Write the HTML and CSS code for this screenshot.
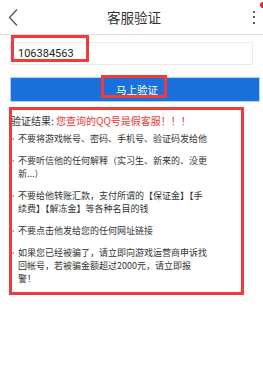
FILE: index.html
```html
<!DOCTYPE html>
<html lang="zh-CN">
<head>
<meta charset="utf-8">
<title>客服验证</title>
<link rel="stylesheet" href="styles.css">
</head>
<body>
<div class="page">
  <header class="header">
    <div class="back">
      <svg width="12" height="20" viewBox="0 0 12 20"><polyline points="9,1.5 1.5,9.5 9,17.5" fill="none" stroke="#555" stroke-width="1.3"/></svg>
    </div>
    <h1 class="title">客服验证</h1>
    <div class="menu">
      <span class="dot"></span><span class="dot"></span><span class="dot"></span>
      <span class="badge"></span>
    </div>
  </header>
  <div class="field">
    <div class="input">106384563</div>
    <span class="mark mark-input"></span>
  </div>
  <div class="btn-wrap">
    <div class="btn"><span class="btn-text">马上验证</span></div>
    <span class="mark mark-btn"></span>
  </div>
  <section class="result">
    <p class="label">验证结果: <span class="warn">您查询的QQ号是假客服！！！</span></p>
    <ul class="tips">
      <li>不要将游戏帐号、密码、手机号、验证码发给他</li>
      <li>不要听信他的任何解释（实习生、新来的、没更新...）</li>
      <li>不要给他转账汇款，支付所谓的【保证金】【手续费】【解冻金】等各种名目的钱</li>
      <li>不要点击他发给您的任何网址链接</li>
      <li>如果您已经被骗了，请立即向游戏运营商申诉找回帐号，若被骗金额超过2000元，请立即报警！</li>
    </ul>
    <span class="mark mark-result"></span>
  </section>
</div>
</body>
</html>
```
FILE: styles.css
```css
* { box-sizing: border-box; }
html, body { margin: 0; padding: 0; background: #fff; }
body {
  font-family: "Noto Sans CJK SC", "Noto Sans", sans-serif;
  color: #333;
  width: 263px;
  height: 385px;
  overflow: hidden;
}
.page { position: relative; }
.header {
  height: 35px;
  border-bottom: 1px solid #e0e0e0;
  display: flex;
  align-items: center;
  position: relative;
}
.back {
  width: 34px;
  padding-left: 8px;
  display: flex;
  align-items: center;
  padding-top: 1px;
}
.title {
  flex: 1;
  margin: 0;
  text-align: center;
  font-size: 13.5px;
  font-weight: normal;
  color: #333;
  line-height: 20px;
}
.menu {
  width: 29px;
  height: 34px;
  display: flex;
  flex-direction: column;
  align-items: flex-end;
  justify-content: center;
  gap: 3.5px;
  padding-right: 8px;
  position: relative;
}
.dot { width: 2px; height: 2px; background: #555; display: block; }
.badge {
  position: absolute;
  right: -3px;
  top: 2px;
  width: 6px;
  height: 6px;
  border-radius: 50%;
  background: #e8282d;
}
.field { position: relative; margin: 7px 10px 0 10px; }
.input {
  width: 243px;
  height: 23px;
  border: 1px solid #ebebeb;
  font-family: Roboto, "Noto Sans", sans-serif;
  font-size: 11px;
  color: #222;
  line-height: 21px;
  padding-left: 7px;
}
.mark {
  position: absolute;
  border: 3px solid #f23a3a;
  pointer-events: none;
}
.mark-input { left: 1px; top: -7px; width: 78px; height: 27px; }
.btn-wrap { position: relative; margin: 12px 3px 0 10px; }
.btn {
  height: 25px;
  background: #1b71db;
  border: 1px solid #a9d3f4;
  border-radius: 1px;
  display: flex;
  align-items: center;
  justify-content: center;
  padding-left: 4px;
}
.btn-text { color: #fff; font-size: 10.5px; line-height: 14px; }
.mark-btn { left: 91px; top: -2px; width: 66px; height: 23px; }
.result { position: relative; margin-top: 12px; }
.label {
  margin: 0;
  padding-left: 11px;
  font-size: 10px;
  line-height: 14px;
  color: #333;
}
.warn { color: #e23a3a; }
.tips {
  list-style: none;
  margin: 4px 0 0 0;
  padding: 0 0 0 18px;
  width: 208px;
}
.tips li {
  position: relative;
  font-size: 9px;
  line-height: 13px;
  color: #333;
  margin-bottom: 9px;
}
.tips li::before {
  content: "";
  position: absolute;
  left: -6px;
  top: 5.5px;
  width: 2px;
  height: 2px;
  background: #bbb;
}
.mark-result { left: 9px; top: -7px; width: 235px; height: 188px; }
```
